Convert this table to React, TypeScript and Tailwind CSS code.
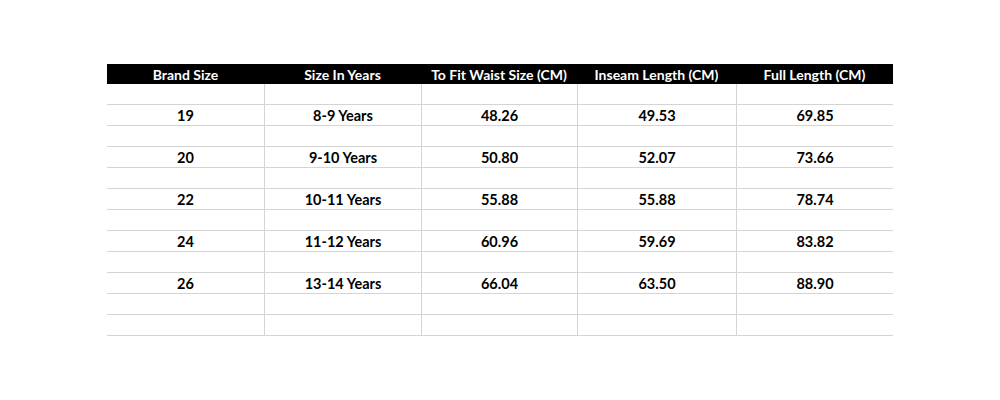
import React from "react";

const headers = ["Brand Size", "Size In Years", "To Fit Waist Size (CM)", "Inseam Length (CM)", "Full Length (CM)"];
const data: (string[] | null)[] = [
  null,
  ["19", "8-9 Years", "48.26", "49.53", "69.85"],
  null,
  ["20", "9-10 Years", "50.80", "52.07", "73.66"],
  null,
  ["22", "10-11 Years", "55.88", "55.88", "78.74"],
  null,
  ["24", "11-12 Years", "60.96", "59.69", "83.82"],
  null,
  ["26", "13-14 Years", "66.04", "63.50", "88.90"],
  null,
  null,
];

export default function App() {
  return (
    <div className="w-[1000px] h-[400px] bg-white pt-[64px] pl-[107px]" style={{ fontFamily: "Lato, 'Open Sans', sans-serif" }}>
      <div className="w-[786px]">
        <div className="grid grid-cols-[157px_157px_156px_159px_157px] h-[20px] bg-black">
          {headers.map((h) => (
            <div key={h} className="text-white font-bold text-[14px] leading-[14px] text-center pt-[4px]">
              {h}
            </div>
          ))}
        </div>
        {data.map((row, i) => (
          <div key={i} className="grid grid-cols-[157px_157px_156px_159px_157px] h-[21px] border-b border-[#d4d4d4]">
            {[0, 1, 2, 3, 4].map((c) => (
              <div
                key={c}
                className={`text-black font-bold text-[14.5px] leading-[14px] text-center pt-[4px] ${c > 0 ? "border-l border-[#d4d4d4]" : ""}`}
              >
                {row ? row[c] : ""}
              </div>
            ))}
          </div>
        ))}
      </div>
    </div>
  );
}
